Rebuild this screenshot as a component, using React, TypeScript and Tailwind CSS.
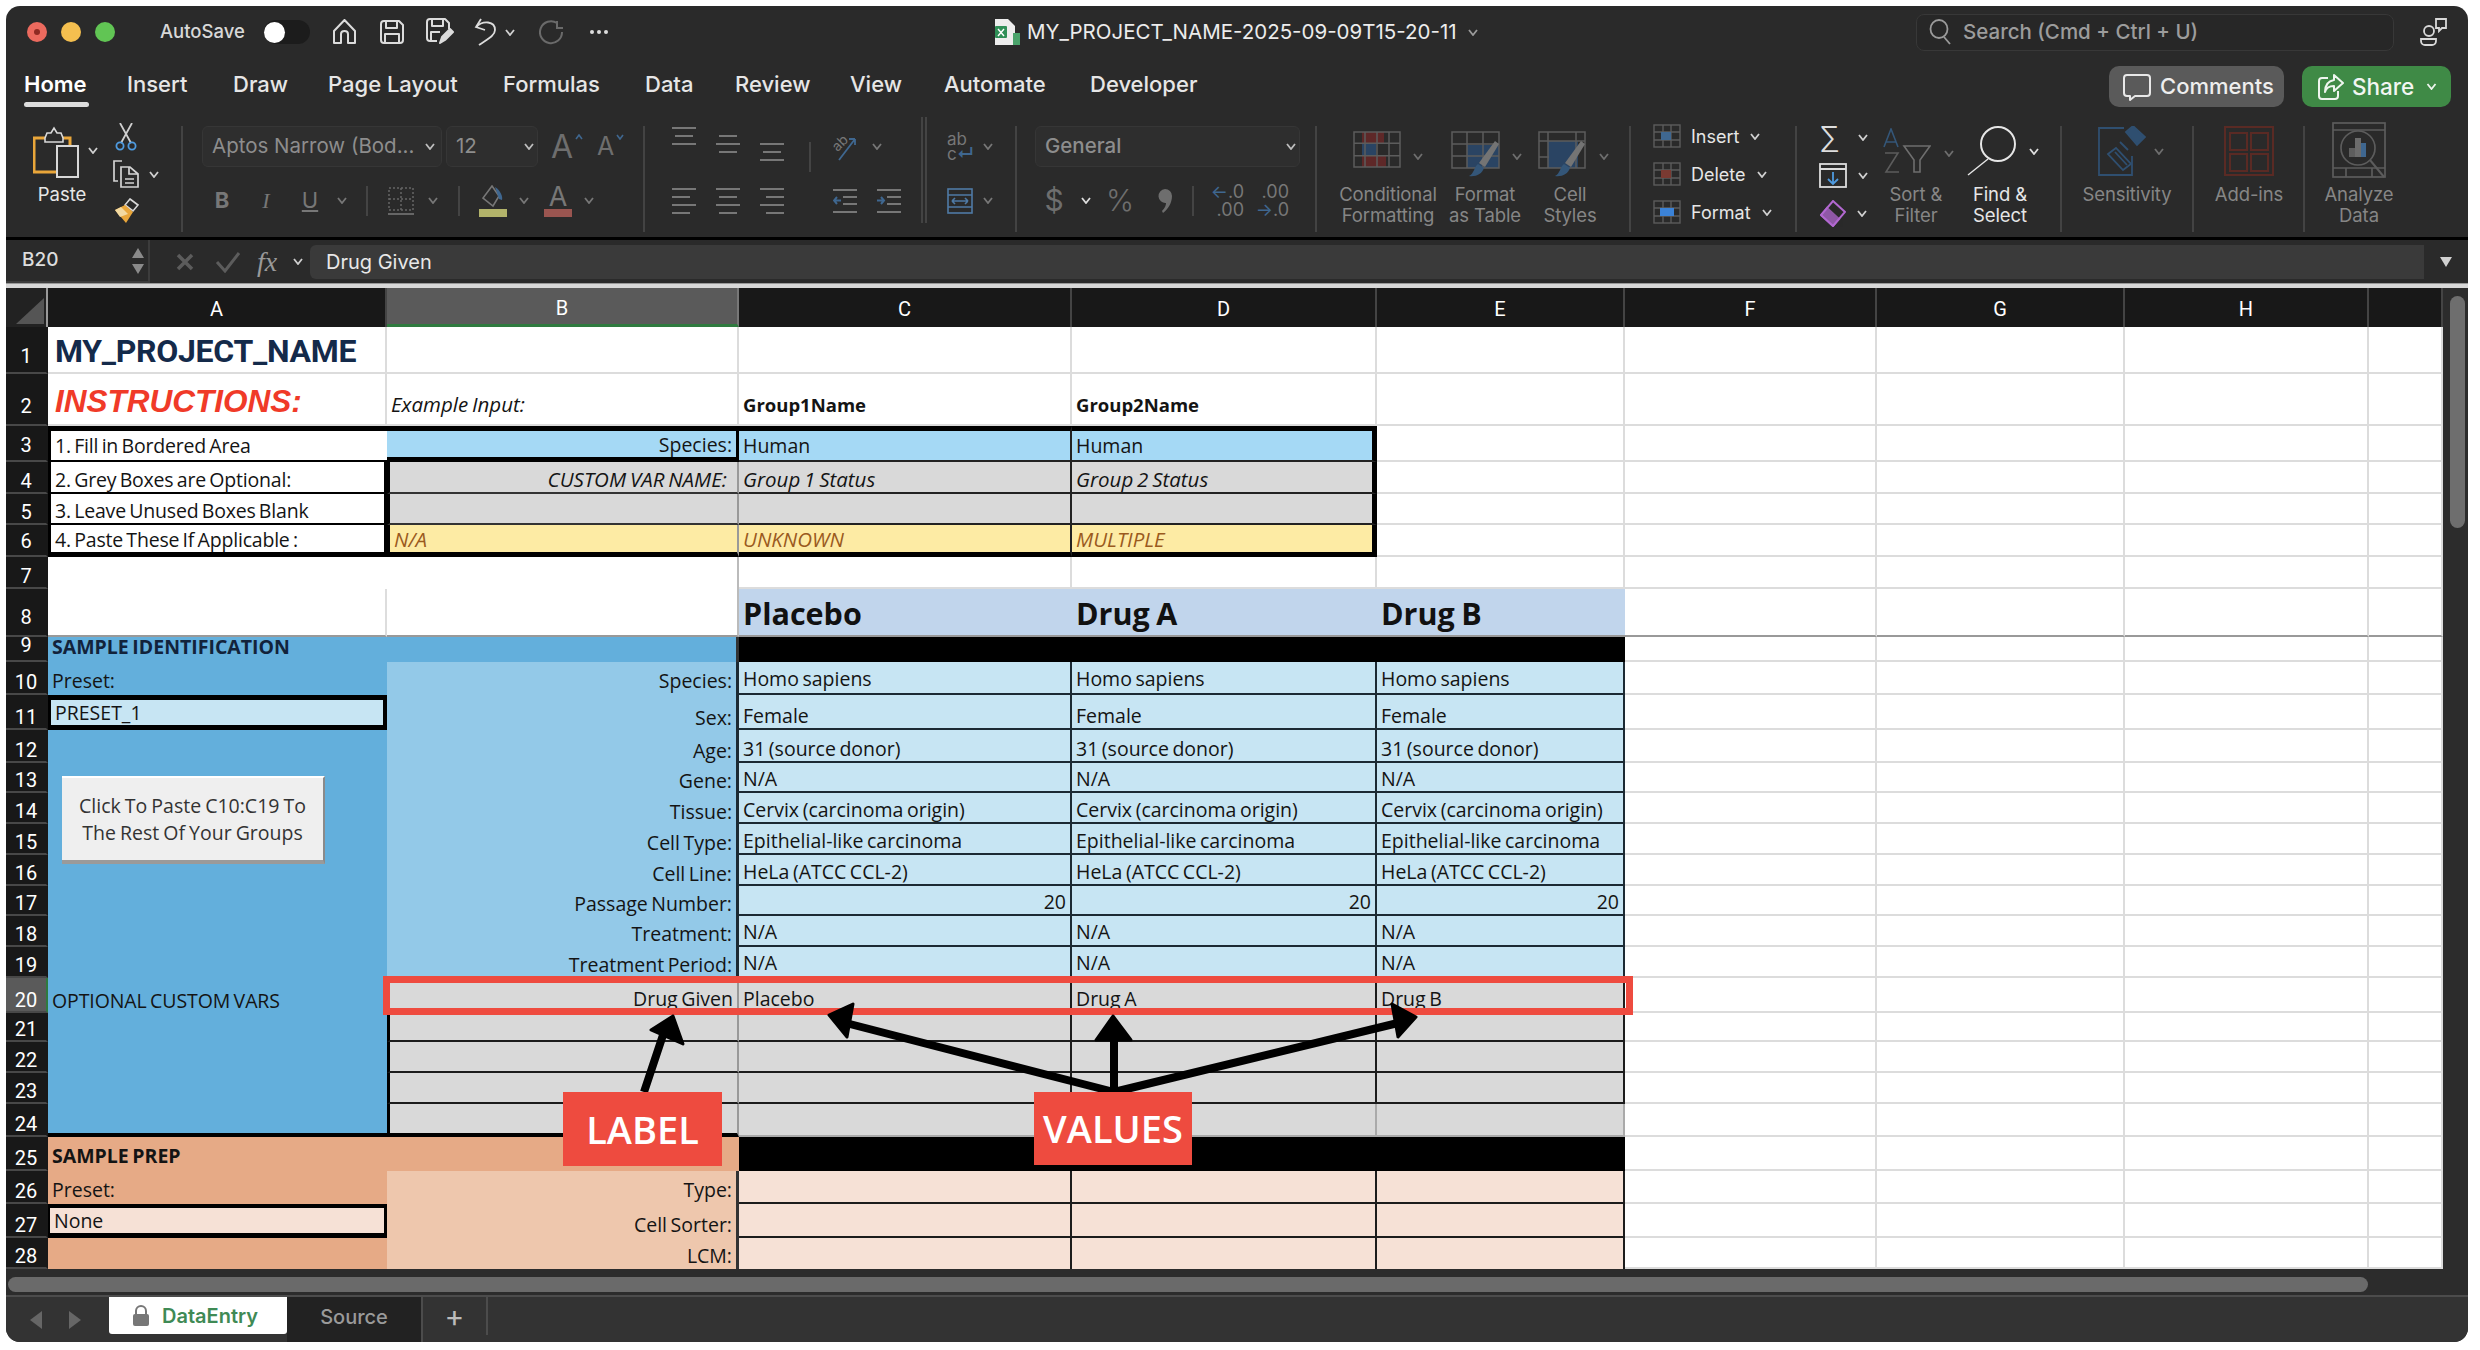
import React from "react";

const W = ["w-[339px]", "w-[352px]", "w-[333px]", "w-[305px]", "w-[248px]", "w-[252px]", "w-[248px]", "w-[244px]", "w-[74px]"];
const GRID = "bg-white border-r-2 border-b-2 border-[#dcdcdc]";
const GRIDD = "bg-white border-r-2 border-r-[#dcdcdc] border-b-2 border-b-[#999]";

type Cell = { t?: string; c?: string };
type RowDef = { n: number; h: string; np?: string; pb?: string; cells: Cell[] };

const BLUE = "bg-[#63afdc]";
const blueA = BLUE;
const lab = "bg-[#93c9e8] border-r-[3px] border-[#1c2a33] justify-end";
const val = "bg-[#c7e5f3] border-r-[2px] border-b-2 border-[#1c2a33]";
const gr = "bg-[#d9d9d9] border-r-[2px] border-b-2 border-[#1c1c1c]";
const grB = "bg-[#d9d9d9] border-l-[3px] border-r-2 border-b-2 border-l-black border-r-[#999] border-b-[#1c1c1c] justify-end";
const peach = "bg-[#f6e1d6] border-r-[2px] border-b-2 border-[#1c1c1c]";
const orgA = "bg-[#e6aa86]";
const orgB = "bg-[#eec7ad] border-r-[3px] border-[#333] justify-end";
const ital = "italic text-[20.5px]";
const ins = " pl-[1px] tracking-[-0.2px]";

const idRow = (n: number, h: string, l: string, v: string[], num = false, a: Cell = { c: blueA }, pb?: string): RowDef => ({
  n, h, pb, cells: [a, { t: l, c: lab }, ...v.map((t) => ({ t, c: val + (num ? " justify-end" : "") }))],
});

const ROWS: RowDef[] = [
  { n: 1, h: "h-[47px]", np: "pb-[5px]", cells: [{ t: "MY_PROJECT_NAME", c: GRID + " font-['Roboto',sans-serif] font-bold text-[32px] text-[#142a4a] pb-[8px] pl-[7px] tracking-[-0.3px]" }, {}, {}, {}, {}] },
  { n: 2, h: "h-[52px]", np: "pb-[7px]", cells: [
    { t: "INSTRUCTIONS:", c: GRID + " font-['Liberation_Sans',sans-serif] font-bold italic text-[31.5px] text-[#f03a28] pb-[10px] pl-[7px]" },
    { t: "Example Input:", c: GRID + " " + ital + " pb-[7px]" },
    { t: "Group1Name", c: GRID + " font-bold text-[18.5px] pb-[7px]" },
    { t: "Group2Name", c: GRID + " font-bold text-[18.5px] pb-[7px]" }, {}] },
  { n: 3, h: "h-[36px]", np: "pb-[4px]", cells: [
    { t: "1. Fill in Bordered Area", c: "bg-white border-l-[3px] border-t-[5px] border-b-[2px] border-black pb-[2px]" + ins },
    { t: "Species:", c: "bg-[#a5d9f5] border-t-[5px] border-b-[5px] border-r-[3px] border-black justify-end" },
    { t: "Human", c: "bg-[#a5d9f5] border-t-[5px] border-b-[2px] border-r-[2px] border-t-black border-r-[#222] border-b-[#222] pb-[2px]" },
    { t: "Human", c: "bg-[#a5d9f5] border-t-[5px] border-b-[2px] border-r-[5px] border-t-black border-r-black border-b-[#222] pb-[2px]" }, {}] },
  { n: 4, h: "h-[32px]", cells: [
    { t: "2. Grey Boxes are Optional:", c: "bg-white border-l-[3px] border-b-2 border-r-[3px] border-black" + ins },
    { t: "CUSTOM VAR NAME:", c: "bg-[#d9d9d9] border-l-[3px] border-r-2 border-b-2 border-l-black border-r-[#999] border-b-[#333] justify-end pr-[10px] " + ital },
    { t: "Group 1 Status", c: "bg-[#d9d9d9] border-r-2 border-b-2 border-[#222] " + ital },
    { t: "Group 2 Status", c: "bg-[#d9d9d9] border-r-[5px] border-b-2 border-r-black border-b-[#222] " + ital }, {}] },
  { n: 5, h: "h-[31px]", cells: [
    { t: "3. Leave Unused Boxes Blank", c: "bg-white border-l-[3px] border-b-2 border-r-[3px] border-black" + ins },
    { c: "bg-[#d9d9d9] border-l-[3px] border-r-2 border-b-2 border-l-black border-r-[#999] border-b-[#333]" },
    { c: "bg-[#d9d9d9] border-r-2 border-b-2 border-[#222]" },
    { c: "bg-[#d9d9d9] border-r-[5px] border-b-2 border-r-black border-b-[#222]" }, {}] },
  { n: 6, h: "h-[32px]", np: "pb-[3px]", cells: [
    { t: "4. Paste These If Applicable :", c: "bg-white border-l-[3px] border-b-[5px] border-r-[3px] border-black" + ins },
    { t: "N/A", c: "bg-[#fdeba4] border-l-[3px] border-r-2 border-b-[5px] border-l-black border-r-[#999] border-b-black text-[#9a5a1e] " + ital },
    { t: "UNKNOWN", c: "bg-[#fdeba4] border-r-2 border-b-[5px] border-r-[#222] border-b-black text-[#9a5a1e] " + ital },
    { t: "MULTIPLE", c: "bg-[#fdeba4] border-r-[5px] border-b-[5px] border-black text-[#9a5a1e] " + ital }, {}] },
  { n: 7, h: "h-[32px]", cells: [{ c: "bg-white" }, { c: "bg-white border-r-2 border-[#bbb]" }, {}, {}, {}] },
  { n: 8, h: "h-[48px]", np: "pb-[7px]", cells: [
    { c: "bg-white border-r-2 border-b-2 border-r-[#ddd] border-b-[#999]" },
    { c: "bg-white border-r-2 border-b-2 border-r-[#bbb] border-b-[#999]" },
    { t: "Placebo", c: "bg-[#c1d5ec] border-b-2 border-[#999] font-bold text-[30.5px] pb-[9px] text-[#111]" },
    { t: "Drug A", c: "bg-[#c1d5ec] border-b-2 border-[#999] font-bold text-[30.5px] pb-[9px] text-[#111]" },
    { t: "Drug B", c: "bg-[#c1d5ec] border-b-2 border-[#999] font-bold text-[30.5px] pb-[9px] text-[#111]" }] },
  { n: 9, h: "h-[25px]", np: "pb-[4px]", cells: [
    { t: "SAMPLE IDENTIFICATION", c: BLUE + " font-bold text-[19.5px] text-[#12233b] pb-[3px]" },
    { c: BLUE + " border-r-[3px] border-[#333]" }, { c: "bg-black" }, { c: "bg-black" }, { c: "bg-black" }] },
  idRow(10, "h-[33px]", "Species:", ["Homo sapiens", "Homo sapiens", "Homo sapiens"], false, { t: "Preset:", c: BLUE }, "pb-[2px]"),
  idRow(11, "h-[35px]", "Sex:", ["Female", "Female", "Female"], false, { t: "PRESET_1", c: "bg-[#c7e5f3] border-l-[3px] border-t-[5px] border-b-[5px] border-r-[4px] border-black" }),
  idRow(12, "h-[33px]", "Age:", ["31 (source donor)", "31 (source donor)", "31 (source donor)"]),
  idRow(13, "h-[30px]", "Gene:", ["N/A", "N/A", "N/A"]),
  idRow(14, "h-[31px]", "Tissue:", ["Cervix (carcinoma origin)", "Cervix (carcinoma origin)", "Cervix (carcinoma origin)"]),
  idRow(15, "h-[31px]", "Cell Type:", ["Epithelial-like carcinoma", "Epithelial-like carcinoma", "Epithelial-like carcinoma"]),
  idRow(16, "h-[31px]", "Cell Line:", ["HeLa (ATCC CCL-2)", "HeLa (ATCC CCL-2)", "HeLa (ATCC CCL-2)"]),
  idRow(17, "h-[30px]", "Passage Number:", ["20", "20", "20"], true),
  idRow(18, "h-[31px]", "Treatment:", ["N/A", "N/A", "N/A"], false, { c: blueA }, "pb-[1px]"),
  idRow(19, "h-[31px]", "Treatment Period:", ["N/A", "N/A", "N/A"], false, { c: blueA }, "pb-[1px]"),
  { n: 20, h: "h-[35px]", cells: [
    { t: "OPTIONAL CUSTOM VARS", c: BLUE + " tracking-[-0.1px]" },
    { t: "Drug Given", c: "bg-[#d9d9d9] border-r-2 border-b-2 border-[#999] justify-end" },
    { t: "Placebo", c: gr }, { t: "Drug A", c: gr }, { t: "Drug B", c: gr }] },
  ...[21, 22, 23].map((n) => ({ n, h: n === 21 ? "h-[29px]" : "h-[31px]", cells: [{ c: BLUE }, { c: grB }, { c: gr }, { c: gr }, { c: gr }] })),
  { n: 24, h: "h-[33px]", cells: [
    { c: BLUE + " border-b-[4px] border-black" },
    { c: "bg-[#d9d9d9] border-l-[3px] border-r-2 border-b-[4px] border-l-black border-r-[#999] border-b-black" },
    { c: gr.replace("border-[#1c1c1c]", "border-[#aaa]") }, { c: gr.replace("border-[#1c1c1c]", "border-[#aaa]") }, { c: gr.replace("border-[#1c1c1c]", "border-[#aaa]") }] },
  { n: 25, h: "h-[34px]", cells: [
    { t: "SAMPLE PREP", c: orgA + " font-bold text-[19.5px] pb-[3px]" }, { c: orgA }, { c: "bg-black" }, { c: "bg-black" }, { c: "bg-black" }] },
  { n: 26, h: "h-[33px]", cells: [{ t: "Preset:", c: orgA + " pb-[2px]" }, { t: "Type:", c: orgB + " pb-[2px]" }, { c: peach }, { c: peach }, { c: peach }] },
  { n: 27, h: "h-[34px]", cells: [
    { t: "None", c: "bg-[#f6e1d6] border-l-[2px] border-t-[4px] border-b-[5px] border-r-[3px] border-black" },
    { t: "Cell Sorter:", c: orgB + " pb-[1px]" }, { c: peach }, { c: peach }, { c: peach }] },
  { n: 28, h: "h-[31px]", cells: [{ c: orgA }, { t: "LCM:", c: orgB + " pb-[1px]" }, { c: "bg-[#f6e1d6] border-r-[2px] border-[#1c1c1c]" }, { c: "bg-[#f6e1d6] border-r-[2px] border-[#1c1c1c]" }, { c: "bg-[#f6e1d6] border-r-[2px] border-[#1c1c1c]" }] },
];

const Chev = ({ c = "#d0d0d0", cls = "", w = 10 }: { c?: string; cls?: string; w?: number }) => (
  <svg width={w} height="7" viewBox="0 0 10 7" className={cls + " shrink-0"} fill="none" stroke={c} strokeWidth="1.8">
    <path d="M1 1l4 5 4-5" />
  </svg>
);

const Lines = ({ rows, top = 0, c = "#777" }: { rows: [number, number][]; top?: number; c?: string }) => (
  <svg width="24" height="36" viewBox="0 0 24 36" fill="none" stroke={c} strokeWidth="2">
    {rows.map(([x, w], i) => (
      <line key={i} x1={x} x2={x + w} y1={top + i * 8} y2={top + i * 8} />
    ))}
  </svg>
);

const Sep = ({ cls = "h-[32px]" }: { cls?: string }) => <div className={"w-[2px] bg-[#444] shrink-0 " + cls} />;

const GroupEnd = "border-r-2 border-[#434343] h-[106px] shrink-0";

const GridIcon = ({ w, h, fills, cols, rows }: { w: number; h: number; cols: number; rows: number; fills: [number, number, number, number, string][] }) => (
  <svg width={w} height={h} viewBox={`0 0 ${w} ${h}`} fill="none" stroke="#5c5c5c" strokeWidth="1.5">
    {fills.map(([x, y, ww, hh, f], i) => (
      <rect key={i} x={x} y={y} width={ww} height={hh} fill={f} stroke="none" />
    ))}
    <rect x="1" y="1" width={w - 2} height={h - 2} />
    {Array.from({ length: cols - 1 }, (_, i) => (
      <line key={i} x1={((i + 1) * w) / cols} x2={((i + 1) * w) / cols} y1="1" y2={h - 1} />
    ))}
    {Array.from({ length: rows - 1 }, (_, i) => (
      <line key={i} y1={((i + 1) * h) / rows} y2={((i + 1) * h) / rows} x1="1" x2={w - 1} />
    ))}
  </svg>
);

const Brush = ({ x = 0, y = 0 }: { x?: number; y?: number }) => (
  <g transform={`translate(${x} ${y})`}>
    <path d="M32 0 L36 3 L22 26 L16 22 Z" fill="#747474" stroke="none" />
    <path d="M15 23 L21 27 C19 33 13 36 6 35 C11 33 11 26 15 23 Z" fill="#345678" stroke="none" />
  </g>
);

const BigTool = ({ w, pl, label, icon, chev, ml, dim = true, chevC }: { w: string; pl?: string; label: string[]; icon: React.ReactNode; chev?: boolean; ml?: string; dim?: boolean; chevC?: string }) => (
  <div className={w + " flex flex-col shrink-0"}>
    <div className={"h-[58px] flex items-start " + (pl ?? "justify-center")}>
      <div className="shrink-0">{icon}</div>
      {chev && <Chev cls={ml + " mt-[22px]"} c={chevC ?? (dim ? "#6e6e6e" : "#ddd")} />}
    </div>
    <div className={"flex flex-col items-center leading-[21px] text-[18.5px] tracking-[-0.1px] whitespace-nowrap " + (dim ? "text-[#868686]" : "text-[#e6e6e6]")}>
      {label.map((l) => (
        <span key={l}>{l}</span>
      ))}
    </div>
  </div>
);

function TitleBar() {
  return (
    <div className="h-[52px] flex items-center pl-[21px] shrink-0">
      <div className="flex gap-[14px]">
        <div className="w-[20px] h-[20px] rounded-full bg-[#ec6a5e] flex items-center justify-center"><div className="w-[6px] h-[6px] rounded-full bg-[#8f2a22]" /></div>
        <div className="w-[20px] h-[20px] rounded-full bg-[#f4bf4f]" />
        <div className="w-[20px] h-[20px] rounded-full bg-[#61c554]" />
      </div>
      <span className="ml-[45px] w-[104px] text-[18.5px] font-medium text-[#d8d8d8] whitespace-nowrap">AutoSave</span>
      <div className="w-[46px] h-[24px] rounded-full bg-[#1c1c1c] flex items-center"><div className="w-[21px] h-[21px] rounded-full bg-white" /></div>
      <svg className="ml-[22px]" width="25" height="26" viewBox="0 0 25 26" fill="none" stroke="#dcdcdc" strokeWidth="2" strokeLinejoin="round"><path d="M2 12L12.5 1 23 12v12h-7V15q0-3-3.5-3T9 15v9H2z" /></svg>
      <svg className="ml-[23px]" width="24" height="24" viewBox="0 0 24 24" fill="none" stroke="#dcdcdc" strokeWidth="2" strokeLinejoin="round"><path d="M4 1h15l4 4v15a3 3 0 0 1-3 3H4a3 3 0 0 1-3-3V4a3 3 0 0 1 3-3z" /><path d="M6 1v7h11V1M5 23v-9h14v9" /></svg>
      <svg className="ml-[22px]" width="28" height="28" viewBox="0 0 28 28" fill="none" stroke="#dcdcdc" strokeWidth="2" strokeLinejoin="round"><path d="M11 23H4a3 3 0 0 1-3-3V4a3 3 0 0 1 3-3h15l4 4v6" /><path d="M6 1v7h11V1M5 23v-9h9" /><path d="M14 25l2-6 8-8 3 3-8 8z" fill="#dcdcdc" /></svg>
      <svg className="ml-[20px]" width="24" height="28" viewBox="0 0 24 28" fill="none" stroke="#dcdcdc" strokeWidth="1.8"><path d="M7 1L2 9l9 3M2 9C9 2 21 3 21 12c0 6-9 10-16 15" /></svg>
      <Chev cls="ml-[7px]" />
      <svg className="ml-[24px]" width="25" height="25" viewBox="0 0 25 25" fill="none" stroke="#6a6a6a" strokeWidth="2"><path d="M18 3A11 11 0 1 0 23 12M18 1v7h6" /></svg>
      <div className="ml-[26px] flex gap-[3px]">
        <div className="w-[4px] h-[4px] rounded-full bg-[#ddd]" /><div className="w-[4px] h-[4px] rounded-full bg-[#ddd]" /><div className="w-[4px] h-[4px] rounded-full bg-[#ddd]" />
      </div>
      <svg className="ml-[386px]" width="27" height="28" viewBox="0 0 27 28">
        <path d="M1 1h13l7 7v19H1z" fill="#ededed" />
        <rect x="1" y="8" width="12" height="12" rx="1" fill="#2f8f57" />
        <rect x="19" y="15" width="7" height="12" fill="#4aa36b" />
        <path d="M4 11l6 7M10 11l-6 7" stroke="#fff" strokeWidth="1.4" />
      </svg>
      <span className="ml-[6px] w-[440px] text-[20.5px] text-[#ececec] whitespace-nowrap">MY_PROJECT_NAME-2025-09-09T15-20-11</span>
      <Chev c="#9a9a9a" w={12} />
      <div className="ml-[437px] w-[478px] h-[37px] rounded-[8px] border border-[#383838] bg-[#272727] flex items-center pl-[12px]">
        <svg width="23" height="26" viewBox="0 0 23 26" fill="none" stroke="#9a9a9a" strokeWidth="1.8"><ellipse cx="10" cy="10" rx="8.5" ry="9" /><line x1="15" y1="18" x2="21" y2="25" /></svg>
        <span className="ml-[11px] text-[20.5px] font-medium text-[#9c9c9c] whitespace-nowrap">Search (Cmd + Ctrl + U)</span>
      </div>
      <svg className="ml-[26px]" width="28" height="28" viewBox="0 0 28 28" fill="none" stroke="#d8d8d8" strokeWidth="1.8"><circle cx="9" cy="13" r="5" /><path d="M1 21h15v2a4 4 0 0 1-4 4H5a4 4 0 0 1-4-4z" /><path d="M16 1h10v9h-4l-3 3v-3h-3z" /></svg>
    </div>
  );
}

const TABS: [string, string][] = [["Home", "w-[103px]"], ["Insert", "w-[106px]"], ["Draw", "w-[95px]"], ["Page Layout", "w-[175px]"], ["Formulas", "w-[142px]"], ["Data", "w-[90px]"], ["Review", "w-[115px]"], ["View", "w-[94px]"], ["Automate", "w-[146px]"], ["Developer", "w-[130px]"]];

function TabBar() {
  return (
    <div className="h-[52px] flex items-start pl-[18px] shrink-0">
      {TABS.map(([t, w], i) => (
        <div key={t} className={w + " flex flex-col items-start pt-[13px]"}>
          <span className={"text-[22px] leading-[26px] whitespace-nowrap " + (i === 0 ? "font-semibold text-white" : "font-medium text-[#e6e6e6]")}>{t}</span>
          {i === 0 && <div className="mt-[5px] w-[65px] h-[5px] rounded-full bg-[#ddd]" />}
        </div>
      ))}
      <div className="ml-[889px] mt-[8px] w-[175px] h-[41px] rounded-[10px] bg-[#5a5a5a] flex items-center pl-[14px] shrink-0">
        <svg width="28" height="28" viewBox="0 0 28 28" fill="none" stroke="#e8e8e8" strokeWidth="2" strokeLinejoin="round"><path d="M4 2h20a3 3 0 0 1 3 3v15a3 3 0 0 1-3 3H12l-5 4v-4H4a3 3 0 0 1-3-3V5a3 3 0 0 1 3-3z" /></svg>
        <span className="ml-[9px] text-[22px] font-medium text-[#eee]">Comments</span>
      </div>
      <div className="ml-[18px] mt-[8px] w-[149px] h-[41px] rounded-[10px] bg-[#3f8a46] flex items-center pl-[16px] shrink-0">
        <svg width="26" height="28" viewBox="0 0 26 28" fill="none" stroke="#eef5ee" strokeWidth="2" strokeLinejoin="round"><path d="M10 5H4a3 3 0 0 0-3 3v15a3 3 0 0 0 3 3h13a3 3 0 0 0 3-3v-5" /><path d="M16 2l9 8-9 8v-5c-5 0-8 2-9 6 0-7 3-11 9-12z" /></svg>
        <span className="ml-[8px] text-[22.5px] font-medium text-[#f2f6f2]">Share</span>
        <Chev c="#eef5ee" w={13} cls="ml-[11px]" />
      </div>
    </div>
  );
}

function Ribbon() {
  const boxCls = "h-[41px] rounded-[6px] bg-[#2e2e2e] border border-[#363636] flex items-center shrink-0";
  return (
    <div className="h-[127px] flex items-start pt-[16px] shrink-0">
      {/* Clipboard */}
      <div className={"w-[177px] pl-[27px] flex " + GroupEnd}>
        <div className="w-[58px] flex flex-col shrink-0">
          <div className="flex h-[58px] items-start">
            <svg width="46" height="52" viewBox="0 0 46 52" fill="none" className="shrink-0">
              <path d="M25 46H1V12h36v18" stroke="#e9a63a" strokeWidth="3" />
              <path d="M12 12l2-5h4l3-5 3 5h4l2 5v4H12z" fill="#2a2a2a" stroke="#d8d8d8" strokeWidth="1.6" />
              <rect x="24" y="33" width="21" height="19" fill="#2a2a2a" />
              <rect x="24" y="20" width="21" height="31" fill="#2a2a2a" stroke="#d8d8d8" strokeWidth="2" />
            </svg>
            <Chev cls="ml-[9px] mt-[21px]" />
          </div>
          <span className="text-center text-[18.5px] leading-[21px] text-[#e6e6e6]">Paste</span>
        </div>
        <div className="ml-[21px] flex flex-col -mt-[3px] shrink-0">
          <svg className="ml-[1px]" width="26" height="28" viewBox="0 0 26 28" fill="none" strokeWidth="1.8">
            <path d="M7 0l11 20M19 0L8 20" stroke="#cfcfcf" />
            <circle cx="7" cy="23" r="3.6" stroke="#4e9be0" /><circle cx="19" cy="23" r="3.6" stroke="#4e9be0" />
          </svg>
          <div className="flex items-center mt-[9px]">
            <svg width="28" height="28" viewBox="0 0 28 28" fill="none" stroke="#d4d4d4" strokeWidth="1.7">
              <path d="M10 1H2v20h4" /><path d="M9 7h9l8 7v13H9z" /><path d="M17 7v7h9M13 19h9M13 23h9" />
            </svg>
            <Chev cls="ml-[9px]" />
          </div>
          <svg className="mt-[10px]" width="28" height="26" viewBox="0 0 28 26">
            <path d="M18 1l8 6-5 6-8-6z" fill="none" stroke="#d8d8d8" strokeWidth="1.6" />
            <path d="M3 12l10-5 8 7-7 11z" fill="#e9a63a" />
            <path d="M3 12l6-3 7 7-8 3z" fill="#f3d9a0" />
          </svg>
        </div>
      </div>
      {/* Font */}
      <div className={"w-[462px] pl-[19px] " + GroupEnd}>
        <div className="flex items-center">
          <div className={boxCls + " w-[240px] pl-[9px] text-[#8d8d8d] text-[20.5px] whitespace-nowrap"}>
            <span className="w-[213px] overflow-hidden">Aptos Narrow (Bod...</span><Chev c="#bdbdbd" />
          </div>
          <div className={boxCls + " ml-[4px] w-[92px] pl-[9px] text-[#8d8d8d] text-[20.5px]"}>
            <span className="w-[68px]">12</span><Chev c="#bdbdbd" />
          </div>
          <span className="ml-[13px] text-[32px] leading-none text-[#6e6e6e]">A</span>
          <svg width="8" height="6" className="-mt-[20px] ml-[2px]" viewBox="0 0 8 6" fill="none" stroke="#3f6790" strokeWidth="1.6"><path d="M1 5l3-4 3 4" /></svg>
          <span className="ml-[14px] text-[25px] leading-none text-[#6e6e6e]">A</span>
          <svg width="8" height="6" className="-mt-[20px] ml-[2px]" viewBox="0 0 8 6" fill="none" stroke="#3f6790" strokeWidth="1.6"><path d="M1 1l3 4 3-4" /></svg>
        </div>
        <div className="flex items-center mt-[13px] h-[41px]">
          <span className="ml-[10px] w-[20px] text-center text-[22px] font-bold text-[#777]">B</span>
          <span className="ml-[24px] w-[20px] text-center text-[22px] italic font-['Liberation_Serif',serif] text-[#777]">I</span>
          <span className="ml-[24px] w-[20px] text-center text-[22px] underline text-[#777]">U</span>
          <Chev c="#777" cls="ml-[17px]" />
          <Sep cls="h-[30px] ml-[19px]" />
          <svg className="ml-[20px]" width="26" height="28" viewBox="0 0 26 28" fill="none" stroke="#666" strokeWidth="1.5" strokeDasharray="2 2"><rect x="1" y="1" width="24" height="22" /><path d="M13 1v22M1 12h24" /><path d="M0 27h26" strokeDasharray="none" strokeWidth="2" /></svg>
          <Chev c="#777" cls="ml-[14px]" />
          <Sep cls="h-[30px] ml-[20px]" />
          <svg className="ml-[19px]" width="28" height="32" viewBox="0 0 28 32" fill="none">
            <path d="M13 1l7 10-6 10-10-8z" stroke="#777" strokeWidth="1.6" />
            <path d="M16 2c5 3 8 9 7 13l-3-1z" fill="#3f6790" />
            <rect x="0" y="24" width="28" height="8" fill="#b2b36a" />
          </svg>
          <Chev c="#777" cls="ml-[12px]" />
          <div className="ml-[15px] w-[28px] flex flex-col items-center">
            <span className="text-[27px] leading-[24px] text-[#777]">A</span>
            <div className="w-[28px] h-[8px] bg-[#9a5550]" />
          </div>
          <Chev c="#777" cls="ml-[12px]" />
        </div>
      </div>
      {/* Alignment */}
      <div className={"w-[278px] pl-[27px] flex " + GroupEnd + " -mt-[9px] h-[106px] border-r-0"}>
        <div className="flex flex-col mt-[9px] w-[137px] shrink-0">
          <div className="flex gap-[20px] h-[41px] items-start">
            <Lines rows={[[0, 24], [3, 18], [0, 24]]} top={2} />
            <Lines rows={[[3, 18], [0, 24], [3, 18]]} top={10} />
            <Lines rows={[[0, 24], [3, 18], [0, 24]]} top={18} />
          </div>
          <div className="flex gap-[20px] h-[41px] mt-[13px] items-center">
            <Lines rows={[[0, 24], [0, 18], [0, 24], [0, 18]]} top={6} />
            <Lines rows={[[0, 24], [3, 18], [0, 24], [3, 18]]} top={6} />
            <Lines rows={[[0, 24], [6, 18], [0, 24], [6, 18]]} top={6} />
          </div>
        </div>
        <Sep cls="h-[30px] mt-[25px]" />
        <div className="flex flex-col ml-[22px] shrink-0 mt-[9px]">
          <div className="flex items-center h-[41px]">
            <svg width="26" height="28" viewBox="0 0 26 28" fill="none"><text x="-1" y="14" fontSize="14" fill="#777" transform="rotate(-45 8 10)">ab</text><path d="M6 27L22 6M22 6h-6M22 6v6" stroke="#3f6790" strokeWidth="1.8" /></svg>
            <Chev c="#777" cls="ml-[13px]" />
          </div>
          <div className="flex gap-[20px] mt-[13px] h-[41px] items-center">
            <svg width="24" height="26" viewBox="0 0 24 26" fill="none" strokeWidth="2"><path d="M0 2h24M10 9h14M10 16h14M0 24h24" stroke="#777" /><path d="M8 12.5H1M4 9l-3 3.5L4 16" stroke="#3f6790" /></svg>
            <svg width="24" height="26" viewBox="0 0 24 26" fill="none" strokeWidth="2"><path d="M0 2h24M10 9h14M10 16h14M0 24h24" stroke="#777" /><path d="M0 12.5h7M4 9l3 3.5L4 16" stroke="#3f6790" /></svg>
          </div>
        </div>
        <Sep cls="h-[106px] ml-[24px]" />
      </div>
      {/* Wrap */}
      <div className={"w-[94px] pl-[24px] " + GroupEnd}>
        <div className="flex items-center h-[41px]">
          <div className="w-[25px] text-[17px] leading-[15px] text-[#777]">ab<br /><span>c</span><span className="text-[#3f6790] font-bold">↵</span></div>
          <Chev c="#777" cls="ml-[11px]" />
        </div>
        <div className="flex items-center h-[41px] mt-[13px]">
          <svg width="26" height="26" viewBox="0 0 26 26" fill="none" stroke="#4f7aa5" strokeWidth="1.6"><rect x="1" y="1" width="24" height="24" /><path d="M1 7h24M1 19h24" /><path d="M5 13h16M5 13l3-3M5 13l3 3M21 13l-3-3M21 13l-3 3" /></svg>
          <Chev c="#777" cls="ml-[10px]" />
        </div>
      </div>
      {/* Number */}
      <div className={"w-[300px] pl-[18px] " + GroupEnd}>
        <div className={boxCls + " w-[265px] pl-[9px] text-[#8d8d8d] text-[20.5px] font-medium"}>
          <span className="w-[241px]">General</span><Chev c="#bdbdbd" />
        </div>
        <div className="flex items-center h-[41px] mt-[13px] text-[#6e6e6e]">
          <span className="ml-[9px] w-[20px] text-center text-[30px]">$</span>
          <Chev c="#ddd" cls="ml-[17px]" />
          <span className="ml-[9px] w-[40px] text-center text-[30px] font-light">%</span>
          <svg className="ml-[18px]" width="14" height="24" viewBox="0 0 14 24" fill="#6e6e6e"><path d="M7 0a7 7 0 0 1 7 7c0 7-4 13-9 17l-1-2c3-3 4-6 4-8A7 7 0 0 1 7 0z" /></svg>
          <Sep cls="h-[30px] ml-[20px]" />
          <div className="ml-[16px] w-[34px] text-[18px] leading-[18px] text-[#777] flex flex-col items-end"><span><span className="text-[#3f6790]">←</span>.0</span><span>.00</span></div>
          <div className="ml-[11px] w-[34px] text-[18px] leading-[18px] text-[#777] flex flex-col items-end"><span>.00</span><span><span className="text-[#3f6790]">→</span>.0</span></div>
        </div>
      </div>
      {/* Styles */}
      <div className={"w-[314px] pl-[21px] flex " + GroupEnd}>
        <BigTool w="w-[100px]" pl="pl-[15px] pt-[5px]" ml="ml-[12px]" chev label={["Conditional", "Formatting"]} icon={<GridIcon w={48} h={37} cols={4} rows={3} fills={[[9, 1, 22, 12, "#5e2828"], [9, 13, 14, 12, "#2a4463"], [9, 25, 24, 11, "#5e2828"]]} />} />
        <BigTool w="w-[94px]" pl="pl-[13px] pt-[5px]" ml="ml-[11px]" chev label={["Format", "as Table"]} icon={
          <svg width="50" height="47" viewBox="0 0 50 47" fill="none" stroke="#5c5c5c" strokeWidth="1.5">
            <rect x="16" y="14" width="32" height="23" fill="#2a4463" stroke="none" />
            <rect x="1" y="1" width="47" height="36" /><path d="M16 1v36M32 1v36M1 13h47M1 25h47" />
            <Brush x={12} y={10} />
          </svg>} />
        <BigTool w="w-[76px]" pl="pl-[6px] pt-[5px]" ml="ml-[13px]" chev label={["Cell", "Styles"]} icon={
          <svg width="48" height="47" viewBox="0 0 48 47" fill="none" stroke="#5c5c5c" strokeWidth="1.5">
            <rect x="10" y="10" width="30" height="27" fill="#2a4463" stroke="none" />
            <rect x="1" y="1" width="46" height="36" /><path d="M10 1v36M38 1v36M1 10h46M1 26h10" />
            <Brush x={11} y={10} />
          </svg>} />
      </div>
      {/* Cells */}
      <div className={"w-[166px] pl-[22px] flex flex-col " + GroupEnd}>
        {[["Insert", "#3f6790"], ["Delete", "#7a3a32"], ["Format", "#3b82d6"]].map(([t, col], i) => (
          <div key={t} className={"flex items-center h-[38px] shrink-0 " + (i === 0 ? "-mt-[9px]" : "")}>
            <svg width="28" height="26" viewBox="0 0 28 26" fill="none" stroke="#5c5c5c" strokeWidth="1.4">
              <rect x="1" y="2" width="26" height="22" /><path d="M10 2v22M18 2v22M1 9h26M1 17h26" />
              <rect x={i === 2 ? 7 : 8} y="9" width={i === 2 ? 14 : 10} height="8" fill={col} stroke="none" />
            </svg>
            <span className="ml-[10px] text-[18px] text-[#e6e6e6]">{t}</span>
            <Chev cls="ml-[11px]" />
          </div>
        ))}
      </div>
      {/* Editing */}
      <div className={"w-[265px] pl-[22px] flex " + GroupEnd}>
        <div className="w-[51px] flex flex-col -mt-[8px] shrink-0">
          <div className="h-[38px] flex items-center">
            <span className="w-[30px] pl-[2px] text-[30px] leading-none font-light text-[#ddd]">∑</span><Chev cls="ml-[9px]" />
          </div>
          <div className="h-[38px] flex items-center">
            <svg width="28" height="25" viewBox="0 0 28 25" fill="none" strokeWidth="1.8"><rect x="1" y="1" width="26" height="23" stroke="#ddd" /><path d="M1 6h26" stroke="#ddd" /><path d="M14 9v12M9 16l5 5 5-5" stroke="#4e9be0" /></svg>
            <Chev cls="ml-[11px]" />
          </div>
          <div className="h-[38px] flex items-center">
            <svg className="ml-[1px]" width="26" height="27" viewBox="0 0 26 27" fill="none" stroke="#b268d0" strokeWidth="2"><path d="M13 1L25 12 13 26 1 15z" /><path d="M1 15l12 11 6-7L7 8z" fill="#b268d0" opacity="0.75" /></svg>
            <Chev cls="ml-[11px]" />
          </div>
        </div>
        <BigTool w="w-[92px]" pl="pl-[13px] pt-[2px]" ml="ml-[13px]" chev label={["Sort &", "Filter"]} icon={
          <svg width="48" height="46" viewBox="0 0 48 46" fill="none" strokeWidth="1.6"><path d="M1 19L8 1l7 18M3 14h10" stroke="#345678" /><path d="M2 25h13L3 44h13" stroke="#5c5c5c" /><path d="M21 18h26l-10 14v12h-6V32z" stroke="#6e6e6e" /></svg>} />
        <BigTool w="w-[76px]" dim={false} pl="pl-[5px]" ml="ml-[12px]" chev label={["Find &", "Select"]} icon={
          <svg width="50" height="50" viewBox="0 0 50 50" fill="none" stroke="#e6e6e6" strokeWidth="2"><ellipse cx="31" cy="18" rx="17" ry="17" /><path d="M21 33L1 49" strokeWidth="1.5" /></svg>} />
      </div>
      {/* Sensitivity */}
      <div className={"w-[132px] " + GroupEnd}>
        <BigTool w="w-[130px]" pl="pl-[36px]" ml="ml-[8px]" chev label={["Sensitivity"]} icon={
          <svg width="48" height="50" viewBox="0 0 48 50" fill="none" stroke="#2f4f70" strokeWidth="1.8"><path d="M26 2H1v47h33V30" /><path d="M28 6L35 0l12 11-8 8z" fill="#2f4f70" /><path d="M10 28l8-6 15 16-8 6z" /><path d="M17 26l12 13M22 16l8 8" /></svg>} />
      </div>
      {/* Add-ins */}
      <div className={"w-[111px] " + GroupEnd}>
        <BigTool w="w-[110px]" label={["Add-ins"]} icon={
          <svg width="50" height="50" viewBox="0 0 50 50" fill="none" stroke="#5a2a24" strokeWidth="2"><rect x="1" y="1" width="48" height="48" /><rect x="6" y="7" width="17" height="17" /><rect x="27" y="7" width="17" height="17" /><rect x="6" y="28" width="17" height="17" /><rect x="27" y="28" width="17" height="17" /></svg>} />
      </div>
      {/* Analyze */}
      <div className="w-[108px] shrink-0">
        <BigTool w="w-[108px]" label={["Analyze", "Data"]} icon={
          <svg className="-mt-[4px]" width="54" height="58" viewBox="0 0 54 58" fill="none" stroke="#5c5c5c" strokeWidth="1.7">
            <rect x="1" y="1" width="52" height="54" /><path d="M1 8h52M1 46h52M14 46v9M40 46v9" />
            <circle cx="26" cy="26" r="17" fill="#2a2a2a" />
            <rect x="17" y="26" width="6" height="9" fill="#5e5e5e" stroke="none" /><rect x="23" y="16" width="6" height="19" fill="#6c6c6c" stroke="none" /><rect x="29" y="21" width="5" height="14" fill="#3f6790" stroke="none" />
            <path d="M38 38l14 17" strokeWidth="2" />
          </svg>} />
      </div>
    </div>
  );
}

function FormulaBar() {
  return (
    <>
      <div className="h-[3px] bg-black shrink-0" />
      <div className="h-[43px] flex items-center shrink-0">
        <div className="w-[144px] h-[43px] border-r-2 border-b-2 border-[#3c3c3c] flex items-center pl-[16px]">
          <span className="w-[110px] text-[19px] text-[#ddd] font-medium">B20</span>
          <div className="flex flex-col gap-[6px]">
            <div className="w-0 h-0 border-l-[6px] border-r-[6px] border-b-[10px] border-l-transparent border-r-transparent border-b-[#8a8a8a]" />
            <div className="w-0 h-0 border-l-[6px] border-r-[6px] border-t-[10px] border-l-transparent border-r-transparent border-t-[#8a8a8a]" />
          </div>
        </div>
        <svg className="ml-[25px]" width="20" height="20" viewBox="0 0 20 20" fill="none" stroke="#5c5c5c" strokeWidth="3.5"><path d="M3 3l14 14M17 3L3 17" /></svg>
        <svg className="ml-[20px]" width="26" height="22" viewBox="0 0 26 22" fill="none" stroke="#5c5c5c" strokeWidth="3"><path d="M2 11l8 9L24 2" /></svg>
        <span className="ml-[16px] w-[38px] font-['Liberation_Serif',serif] italic text-[28px] text-[#999]">fx</span>
        <Chev c="#cfcfcf" cls="-ml-[2px]" />
        <div className="ml-[7px] w-[2114px] h-[34px] rounded-l-[6px] bg-[#3a3a3a] flex items-center pl-[16px] text-[20px] text-[#e8e8e8]">Drug Given</div>
        <div className="flex-1 h-[34px] bg-[#2a2a2a] flex items-center justify-center">
          <div className="w-0 h-0 border-l-[6px] border-r-[6px] border-t-[10px] border-l-transparent border-r-transparent border-t-[#d0d0d0]" />
        </div>
      </div>
      <div className="h-[5px] bg-[#d8d8d8] border-t border-[#999] shrink-0" />
    </>
  );
}

const HEAD = ["A", "B", "C", "D", "E", "F", "G", "H", ""];

function Sheet() {
  return (
    <div className="flex shrink-0 h-[981px] overflow-hidden">
      <div className="w-[2437px] shrink-0 font-['Open_Sans',sans-serif] text-[19.5px] text-[#141414] [word-spacing:-1.5px]">
        <div className="flex h-[39px]">
          <div className="w-[42px] bg-[#222] border-r-2 border-[#999] flex items-end justify-end pr-[2px] pb-[3px]">
            <div className="w-0 h-0 border-b-[26px] border-l-[28px] border-b-[#555] border-l-transparent" />
          </div>
          {HEAD.map((h, i) => (
            <div key={i} className={W[i] + " shrink-0 flex items-center justify-center pt-[3px] text-[20px] font-['Roboto',sans-serif] border-r-2 text-white " + (i === 1 ? "bg-[#5a5a5a] border-b-[3px] border-r-[#777] border-b-[#2f7a3f]" : "bg-[#181818] border-[#444]")}>
              {h}
            </div>
          ))}
        </div>
        {ROWS.map((r) => (
          <div key={r.n} className={"flex " + r.h}>
            <div className={"w-[42px] shrink-0 flex items-end justify-center border-b-2 border-[#484848] border-r-2 text-white text-[20px] leading-[22px] font-['Roboto',sans-serif] " + (r.n === 20 ? "bg-[#5a5a5a] border-r-[#2f7a3f] " : "bg-[#181818] border-r-[#181818] ") + (r.np ?? "")}>
              {r.n}
            </div>
            {W.map((w, i) => {
              const cell = r.cells[i];
              const cls = cell ? cell.c ?? (r.n === 8 ? GRIDD : GRID) : r.n === 8 ? GRIDD : GRID;
              return (
                <div key={i} className={w + " shrink-0 flex items-end pl-[4px] pr-[4px] leading-[25px] whitespace-nowrap overflow-hidden " + cls + (cell?.t && r.pb ? " " + r.pb : "")}>
                  {cell?.t}
                </div>
              );
            })}
          </div>
        ))}
      </div>
      <div className="flex-1 bg-[#2c2c2c] pl-[7px] pt-[8px]">
        <div className="w-[15px] h-[232px] rounded-full bg-[#6e6e6e]" />
      </div>
    </div>
  );
}

function BottomBars() {
  return (
    <>
      <div className="h-[26px] bg-[#2c2c2c] pt-[8px] pl-[2px] shrink-0">
        <div className="w-[2360px] h-[15px] rounded-full bg-[#6a6a6a]" />
      </div>
      <div className="flex-1 bg-[#333] border-t-2 border-[#4c4c4c] flex items-start">
        <div className="w-0 h-0 ml-[24px] mt-[14px] border-t-[9px] border-b-[9px] border-r-[12px] border-t-transparent border-b-transparent border-r-[#666]" />
        <div className="w-0 h-0 ml-[27px] mt-[14px] border-t-[9px] border-b-[9px] border-l-[12px] border-t-transparent border-b-transparent border-l-[#666]" />
        <div className="ml-[28px] w-[178px] h-[37px] bg-white rounded-b-[3px] flex items-center pl-[24px]">
          <svg width="16" height="21" viewBox="0 0 16 21" fill="#777"><rect x="0" y="9" width="16" height="12" rx="2" /><path d="M3 9V6a5 5 0 0 1 10 0v3" fill="none" stroke="#777" strokeWidth="2" /></svg>
          <span className="ml-[13px] text-[20px] font-semibold text-[#3f8a55]">DataEntry</span>
        </div>
        <div className="w-[136px] h-[45px] bg-[#222] flex items-start justify-center pt-[5px] text-[20px] text-[#9a9a9a] font-medium border-r-2 border-[#4c4c4c]">Source</div>
        <div className="w-[65px] h-[38px] flex items-center justify-center text-[30px] leading-none text-[#bbb] border-r-2 border-[#4c4c4c]">+</div>
      </div>
    </>
  );
}

export default function App() {
  return (
    <div className="relative w-[2480px] h-[1350px] bg-white pt-[6px] pl-[6px] overflow-hidden font-['Inter',sans-serif]">
      <div className="w-[2462px] h-[1336px] rounded-[14px] bg-[#2a2a2a] flex flex-col overflow-hidden">
        <TitleBar />
        <TabBar />
        <Ribbon />
        <FormulaBar />
        <Sheet />
        <BottomBars />
      </div>

      {/* annotation overlays */}
      <div className="absolute left-[62px] top-[776px] w-[263px] h-[88px] bg-[#efefef] border-t-2 border-t-white border-b-[4px] border-b-[#9a9a9a] border-r-2 border-r-[#8a8a8a] flex items-center justify-center text-center text-[19.5px] leading-[27px] text-[#333] font-['Open_Sans',sans-serif] [word-spacing:-1px] whitespace-nowrap">
        Click To Paste C10:C19 To<br />The Rest Of Your Groups
      </div>
      <div className="absolute left-[383px] top-[976px] w-[1250px] h-[39px] border-[7px] border-[#ee4b3f]" />
      <svg className="absolute left-0 top-0 pointer-events-none" width="2480" height="1350" viewBox="0 0 2480 1350" fill="none">
        <g stroke="#000" strokeWidth="8">
          <path d="M644 1092L664 1032" />
          <path d="M1114 1092L842 1022" />
          <path d="M1114 1092V1034" />
          <path d="M1114 1092L1402 1022" />
        </g>
        <g fill="#000" stroke="#000" strokeWidth="3" strokeLinejoin="round">
          <path d="M673 1016L651 1030 683 1044Z" />
          <path d="M853 1004L829 1015 847 1037Z" />
          <path d="M1113 1016L1096 1040H1131Z" />
          <path d="M1392 1004L1416 1017 1398 1037Z" />
        </g>
      </svg>
      <div className="absolute left-[563px] top-[1092px] w-[159px] h-[74px] bg-[#ee4b3f] flex items-center justify-center text-white text-[38px] font-semibold font-['Open_Sans',sans-serif]">LABEL</div>
      <div className="absolute left-[1034px] top-[1092px] w-[158px] h-[73px] bg-[#ee4b3f] flex items-center justify-center text-white text-[38px] font-semibold font-['Open_Sans',sans-serif]">VALUES</div>
    </div>
  );
}
